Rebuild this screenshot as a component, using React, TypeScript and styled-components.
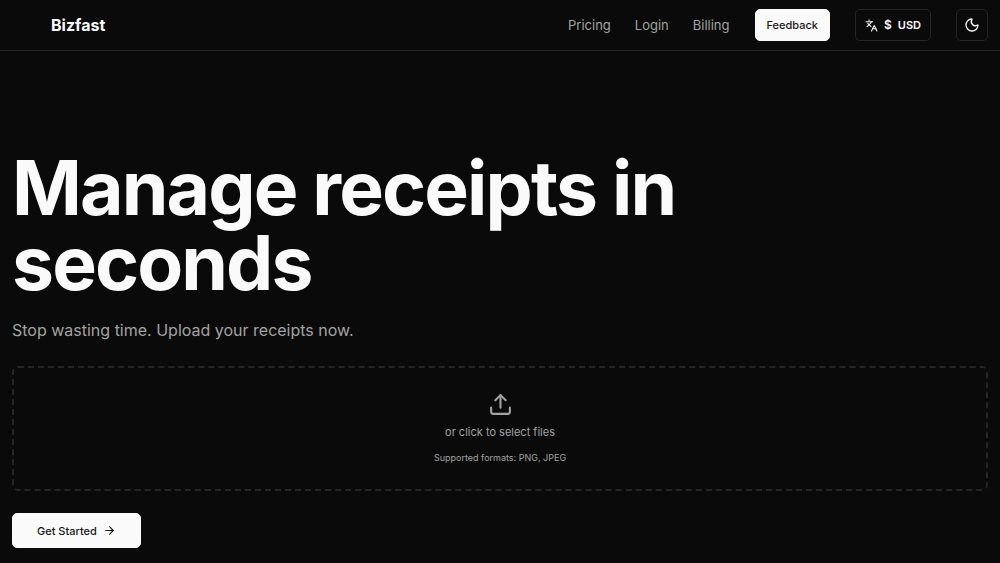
import React from "react";
import styled, { createGlobalStyle } from "styled-components";
import { ArrowRight, Languages, Moon, Upload } from "lucide-react";

const GlobalStyle = createGlobalStyle`
  *, *::before, *::after { box-sizing: border-box; }
  body {
    margin: 0;
    background: #0a0a0a;
    color: #fafafa;
    font-family: Inter, "Liberation Sans", sans-serif;
  }
  button { font-family: inherit; cursor: pointer; }
`;

const Header = styled.header`
  display: flex;
  align-items: center;
  justify-content: space-between;
  padding: 9px 12px 9px 51px;
  border-bottom: 1px solid #262626;
`;

const Brand = styled.a`
  color: #fafafa;
  font-size: 16px;
  line-height: 24px;
  font-weight: 700;
  text-decoration: none;
`;

const Nav = styled.nav`
  display: flex;
  align-items: center;
  gap: 25px;
`;

const NavLinks = styled.div`
  display: flex;
  gap: 24px;
`;

const NavLink = styled.a`
  color: #a3a3a3;
  font-size: 13px;
  line-height: 20px;
  text-decoration: none;
`;

const paddings = { icon: 7, small: 9, medium: 11, large: 24 };

const Button = styled.button<{ $variant?: "solid" | "outline"; $size?: keyof typeof paddings }>`
  display: inline-flex;
  align-items: center;
  justify-content: center;
  gap: 6px;
  height: ${({ $size }) => ($size === "large" ? 35 : 32)}px;
  padding: 0 ${({ $size = "medium" }) => paddings[$size]}px;
  border: 1px solid ${({ $variant }) => ($variant === "outline" ? "#262626" : "#fafafa")};
  border-radius: 5px;
  background: ${({ $variant }) => ($variant === "outline" ? "#0a0a0a" : "#fafafa")};
  color: ${({ $variant }) => ($variant === "outline" ? "#fafafa" : "#171717")};
  font-size: 11px;
  line-height: 16px;
  font-weight: ${({ $variant }) => ($variant === "outline" ? 600 : 500)};
`;

const CurrencySign = styled.span`
  font-size: 12px;
`;

const Main = styled.main`
  display: flex;
  flex-direction: column;
  align-items: flex-start;
  padding: 99px 12px 16px;
`;

const Title = styled.h1`
  max-width: 750px;
  margin: 0;
  font-size: 75px;
  line-height: 75px;
  font-weight: 700;
  letter-spacing: -0.025em;
`;

const Subtitle = styled.p`
  margin: 18px 0 24px;
  color: #a3a3a3;
  font-size: 16px;
  line-height: 24px;
`;

const DropZone = styled.label`
  display: flex;
  flex-direction: column;
  align-items: center;
  align-self: stretch;
  padding: 24px;
  border: 2px dashed #262626;
  border-radius: 6px;
  color: #a3a3a3;
  cursor: pointer;
`;

const FileInput = styled.input`
  display: none;
`;

const Prompt = styled.span`
  margin-top: 7px;
  font-size: 11px;
  line-height: 16px;
`;

const Formats = styled.span`
  margin-top: 11px;
  font-size: 9px;
  line-height: 14px;
`;

const Actions = styled.div`
  margin-top: 22px;
`;

export default function App() {
  return (
    <>
      <GlobalStyle />
      <Header>
        <Brand href="#">Bizfast</Brand>
        <Nav>
          <NavLinks>
            <NavLink href="#pricing">Pricing</NavLink>
            <NavLink href="#login">Login</NavLink>
            <NavLink href="#billing">Billing</NavLink>
          </NavLinks>
          <Button type="button">Feedback</Button>
          <Button type="button" $variant="outline" $size="small">
            <Languages size={13} />
            <CurrencySign>$</CurrencySign>
            <span>USD</span>
          </Button>
          <Button type="button" $variant="outline" $size="icon" aria-label="Toggle theme">
            <Moon size={16} />
          </Button>
        </Nav>
      </Header>
      <Main>
        <Title>Manage receipts in seconds</Title>
        <Subtitle>Stop wasting time. Upload your receipts now.</Subtitle>
        <DropZone>
          <FileInput type="file" accept="image/png,image/jpeg" multiple />
          <Upload size={25} />
          <Prompt>or click to select files</Prompt>
          <Formats>Supported formats: PNG, JPEG</Formats>
        </DropZone>
        <Actions>
          <Button type="button" $size="large">
            Get Started
            <ArrowRight size={13} />
          </Button>
        </Actions>
      </Main>
    </>
  );
}
